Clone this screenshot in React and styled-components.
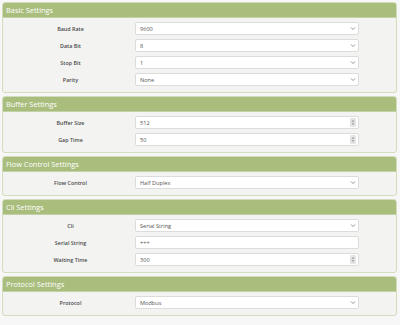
import React from "react";
import styled, { createGlobalStyle } from "styled-components";

const Global = createGlobalStyle`
  html, body { margin: 0; padding: 0; background: #f7f7f7; }
  body { font-family: "Open Sans", "Liberation Sans", sans-serif; }
  * { box-sizing: border-box; }
`;

const Page = styled.div`
  display: flex;
  flex-direction: column;
  gap: 3px;
  padding: 2px 3px 6px 2px;
`;

const Panel = styled.section`
  border: 1px solid #d2ddbd;
  border-radius: 3px;
  background: #f3f4f2;
  overflow: hidden;
`;

const Header = styled.h2`
  margin: 0;
  height: 15px;
  line-height: 15px;
  padding-left: 3px;
  background: #a9bd7d;
  border-bottom: 1px solid #c3d1a6;
  color: #ffffff;
  font-size: 7.4px;
  font-weight: 400;
`;

const Body = styled.div`
  display: grid;
  grid-template-columns: 129px 224px;
  row-gap: 4px;
  align-items: center;
  padding: 4px 0 6px 3px;
`;

const Label = styled.label`
  text-align: center;
  font-size: 5.4px;
  font-weight: 600;
  color: #4a4a4a;
`;

const Field = styled.div`
  height: 13px;
  border: 1px solid #dcdcdc;
  border-radius: 2px;
  background: #fff;
  display: flex;
  align-items: center;
  justify-content: space-between;
  padding: 0 2px 0 4px;
  font-size: 5.6px;
  color: #555;
`;

const Spinner = styled.span`
  width: 6px;
  height: 9px;
  background: #e4e4e4;
  border-radius: 1px;
  display: flex;
  align-items: center;
  justify-content: center;
`;

const Chevron = () => (
  <svg width="6" height="5" viewBox="0 0 6 5">
    <polyline points="1,1.5 3,3.5 5,1.5" fill="none" stroke="#888" strokeWidth="0.9" />
  </svg>
);

const Spin = () => (
  <Spinner>
    <svg width="4" height="7" viewBox="0 0 4 7">
      <polygon points="0.5,2.8 2,1 3.5,2.8" fill="#9a9a9a" />
      <polygon points="0.5,4.2 2,6 3.5,4.2" fill="#9a9a9a" />
    </svg>
  </Spinner>
);

const Row = ({ label, value, kind }) => (
  <>
    <Label>{label}</Label>
    <Field>
      <span>{value}</span>
      {kind === "select" && <Chevron />}
      {kind === "number" && <Spin />}
    </Field>
  </>
);

const sections = [
  {
    title: "Basic Settings",
    rows: [
      ["Baud Rate", "9600", "select"],
      ["Data Bit", "8", "select"],
      ["Stop Bit", "1", "select"],
      ["Parity", "None", "select"],
    ],
  },
  {
    title: "Buffer Settings",
    rows: [
      ["Buffer Size", "512", "number"],
      ["Gap Time", "50", "number"],
    ],
  },
  {
    title: "Flow Control Settings",
    rows: [["Flow Control", "Half Duplex", "select"]],
  },
  {
    title: "Cli Settings",
    rows: [
      ["Cli", "Serial String", "select"],
      ["Serial String", "+++", "text"],
      ["Waiting Time", "300", "number"],
    ],
  },
  {
    title: "Protocol Settings",
    rows: [["Protocol", "Modbus", "select"]],
  },
];

export default function App() {
  return (
    <>
      <Global />
      <Page>
        {sections.map((s) => (
          <Panel key={s.title}>
            <Header>{s.title}</Header>
            <Body>
              {s.rows.map(([l, v, k]) => (
                <Row key={l} label={l} value={v} kind={k} />
              ))}
            </Body>
          </Panel>
        ))}
      </Page>
    </>
  );
}
